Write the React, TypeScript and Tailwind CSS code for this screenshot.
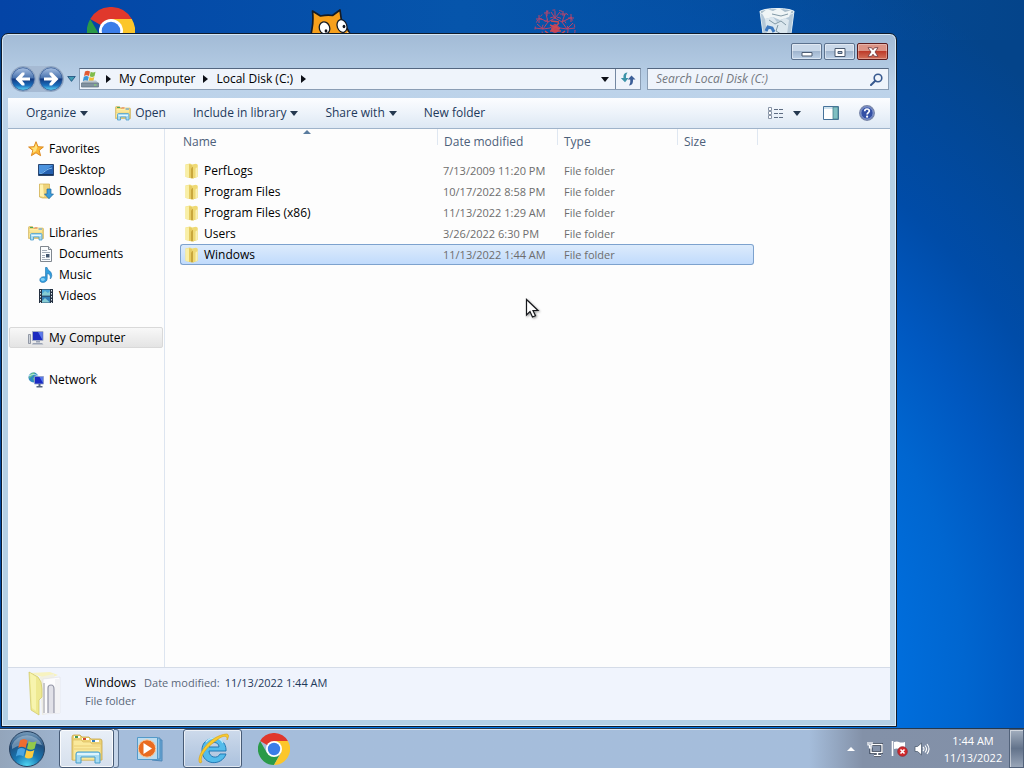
import React from "react";

const font = "font-['Open_Sans','Noto_Sans',sans-serif]";

function ChromeIcon({ className }: { className: string }) {
  return (
    <svg viewBox="0 0 48 48" className={className} aria-hidden="true">
      <path d="M24 24 3.2 12A24 24 0 0 1 44.8 12Z" fill="#e0382c" />
      <path d="M3.2 12A24 24 0 0 0 24 48L34 30 24 24 13.6 30Z" fill="#2a9a48" />
      <path d="M34.4 30 24 48A24 24 0 0 0 44.8 12H24Z" fill="#fcc62b" />
      <circle cx="24" cy="24" r="12" fill="#fff" />
      <circle cx="24" cy="24" r="9.3" fill="#3b7de8" />
    </svg>
  );
}

function CatIcon() {
  return (
    <svg viewBox="0 0 48 48" className="size-12" aria-hidden="true">
      <path d="M3 26C4 18 6 15 4.500 2l8 5c5-1 9-1 12-.5l7.500-5.500 1.500 11c5 6 8 10 9 15l1 8H2z" fill="#f7a01c" stroke="#151b25" strokeWidth="1.700" strokeLinejoin="round" />
      <ellipse cx="16.500" cy="19" rx="5.200" ry="6.300" fill="#fff" stroke="#151b25" strokeWidth="1.300" transform="rotate(-18 16.500 19)" />
      <ellipse cx="34" cy="17" rx="4.800" ry="6.500" fill="#fff" stroke="#151b25" strokeWidth="1.300" transform="rotate(-20 34 17)" />
      <ellipse cx="18" cy="22" rx="1.400" ry="1.800" fill="#10131a" />
      <ellipse cx="36" cy="17.500" rx="1.400" ry="1.800" fill="#10131a" />
      <path d="m39 23 5 2-2 4z" fill="#fff" />
    </svg>
  );
}

function AtomIcon() {
  return (
    <svg viewBox="0 0 48 48" className="size-12" fill="none" stroke="#b8446a" strokeWidth="1" aria-hidden="true">
      <circle cx="24" cy="23" r="20" strokeDasharray="3 4" />
      <circle cx="24" cy="23" r="13" strokeDasharray="4 3" />
      <path d="M24 4v7l-7 4-9-4m16 0 7 4 10-5M24 11l-4-6m4 6 5-6M17 15l-5 7-8-1m13-6-2-8m16 8 5 7 8-1m-13-6 3-8M12 22l7-1 5-4 5 4 7 1M6 17l6 5m24 0 6-6M8 8v8m-3-4h6m29-5v8m-3-4h6M16 3v6m-3-3h6m13-2v5m-3-2h6" />
      <circle cx="24" cy="22" r="3.500" fill="#c44358" />
      <path d="m19 18 10 4m-9 2 8-8M20 14l8 1m-9 9h11M14 24l4 3m16-3-4 3" stroke="#cc4a52" strokeWidth="1.500" />
    </svg>
  );
}

function BinIcon() {
  return (
    <svg viewBox="0 0 40 44" className="h-11 w-10" aria-hidden="true">
      <path d="m3 3 5 38h24l5-38z" fill="#b4c8d8" stroke="#dcebf4" />
      <ellipse cx="20" cy="4" rx="17" ry="3.500" fill="#a9bdca" stroke="#e9f3f8" />
      <path d="m5 5 5-4 6 2 6-3 6 4 7-2-3 7-9 3-7-3-8 2z" fill="#eff5f6" />
      <path d="m8 11 8-2 4 5 8-4 4 2-2 14H10z" fill="#dbe7ee" />
      <path d="m15 6 9 2 7-2M12 12l6 4 6-3 5 4m-8 0-2 6 5 3" stroke="#8199a6" fill="none" />
      <path d="m9 23 2-4 4 1 2 4" stroke="#3c78bf" strokeWidth="3" fill="none" />
    </svg>
  );
}

function Folder() {
  return (
    <svg viewBox="0 0 16 16" className="size-4" aria-hidden="true">
      <path d="M1.500 1.500 6 .5l2 1 4-.7 1.500 1V14l-5 1.500-7-1.500z" fill="#eedb77" />
      <path d="M1.500 1.500 5 1.200v13.500l-3.500-1z" fill="#f9efa6" />
      <path d="M5 1.200 8 2v6l-1.500 7.200L5 14.700z" fill="#e6cc62" />
      <path d="M7 5.500 9.500 3v12.300H7z" fill="#c8a63c" />
      <path d="M9 2.500 11 1l2.500.8V13.500L9 15.500z" fill="#efd974" />
      <path d="M11.500 5.500 13.500 4v9.500l-2 1z" fill="#faf1b4" />
    </svg>
  );
}

function LibraryIcon() {
  return (
    <svg viewBox="0 0 32 32" className="size-4" aria-hidden="true">
      <path d="M1 5q0-2 2-2h6l2 3h18q2 0 2 2v19H1z" fill="#f0d477" stroke="#c5a447" />
      <path d="M3 8h10l2-3h13v19H3z" fill="#fff1ac" />
      <path d="M4 4h6v2H4z" fill="#48a860" />
      <path d="M13 5h6v2h-6z" fill="#de633b" />
      <path d="M21 7h7v2h-7z" fill="#3a83cc" />
      <path d="M2 12h28M2 15h28" stroke="#e7c866" />
      <path d="M5 30V19q0-2 2-2h19q2 0 2 2v11h-6v-6H11v6z" fill="#a9dbf2" stroke="#4499c9" strokeWidth="1.5" />
      <path d="M7 20h19v2H7z" fill="#e4f7ff" />
    </svg>
  );
}

function StarIcon() {
  return (
    <svg viewBox="0 0 16 16" className="size-4" aria-hidden="true">
      <path d="m8 .7 2 5 5.400.3-4.200 3.400 1.400 5.300L8 11.800l-4.600 2.900 1.400-5.300L.6 6 6 5.700z" fill="#fbb836" stroke="#d98116" strokeWidth=".9" strokeLinejoin="round" />
      <path d="M8 2.500 9.300 6.500 8 10 4.500 12l1-3.500L2.800 6.700l3.700-.3z" fill="#ffe480" />
    </svg>
  );
}

function DesktopIcon() {
  return (
    <svg viewBox="0 0 16 16" className="size-4" aria-hidden="true">
      <path d="M.5 2.500h15v11H.5z" fill="#2560b0" stroke="#2a4671" />
      <path d="M1 3h14L2 12H1z" fill="#4c93de" />
      <path d="M2 12c4-1 6-5 12-6" stroke="#83c0f2" fill="none" />
      <path d="M1 12h14v1H1z" fill="#16365e" />
    </svg>
  );
}

function DownloadsIcon() {
  return (
    <svg viewBox="0 0 16 16" className="size-4" aria-hidden="true">
      <path d="M1.500 1h10v14h-7l-3-1z" fill="#eed37a" stroke="#ceac4a" strokeWidth=".7" />
      <path d="M2 1.500h3l1 12.500-4-1z" fill="#fff2b0" />
      <path d="M9 6h4v5h2.500L11 15.700 6.500 11H9z" fill="#3b9bd9" stroke="#20689e" strokeWidth=".7" />
    </svg>
  );
}

function DocumentIcon() {
  return (
    <svg viewBox="0 0 16 16" className="size-4" aria-hidden="true">
      <path d="M2.500.5h8l3 3v12h-11z" fill="#fafcfe" stroke="#80878f" />
      <path d="M10.500.5v3h3" fill="#dce4ec" stroke="#80878f" />
      <path d="M4 4.500h5M4 6.500h8M4 9.500h3M4 11.500h3M4 13.500h8" stroke="#a3acb7" />
      <path d="M8 8h3.500v3.500H8z" fill="#42566f" />
    </svg>
  );
}

function MusicIcon() {
  return (
    <svg viewBox="0 0 16 16" className="size-4" aria-hidden="true">
      <path d="M7.500.5 9 .3c0 3 5 3.700 4.800 8.200-.1 1.800-1 3-1.600 3.500.6-3.500-.4-4.800-3-5.500v5.200C9.200 16 2 17 1.800 13c0-2.700 3-4 5.700-3z" fill="#319ede" stroke="#1c70ac" strokeWidth=".6" />
      <ellipse cx="4.800" cy="12.500" rx="2" ry="1.400" fill="#83d0f7" />
    </svg>
  );
}

function VideoIcon() {
  return (
    <svg viewBox="0 0 16 16" className="size-4" aria-hidden="true">
      <path d="M1 1h14v14H1z" fill="#253141" />
      <path d="M4 1.500h8v6H4z" fill="#4aa7d8" />
      <path d="M4 8.500h8v6H4z" fill="#327db6" />
      <path d="m4 6 3-3 3 2 2-2v4.500H4zM4 13l3-3 5 4.500H4z" fill="#86ccd3" />
      <path d="M2.500 2v13M13.500 2v13" stroke="#dae4ed" strokeDasharray="1.500 1.500" />
    </svg>
  );
}

function ComputerIcon() {
  return (
    <svg viewBox="0 0 16 16" className="size-4" aria-hidden="true">
      <path d="M.5 4.500h2v9h-2z" fill="#ccd2db" stroke="#7f8795" strokeWidth=".8" />
      <path d="M4.500 1.500h10.500v9H4.500z" fill="#1b2ac0" stroke="#a3acc4" />
      <path d="M10 2h4.500V10z" fill="#5b78ea" />
      <path d="M8 11h4v1.500H8zM5 13h9l1.500 1.500H4z" fill="#9aa3b5" />
    </svg>
  );
}

function NetworkIcon() {
  return (
    <svg viewBox="0 0 16 16" className="size-4" aria-hidden="true">
      <circle cx="5.500" cy="5.500" r="5" fill="#2f8ac2" />
      <path d="M2 2.500c2-2 4-2 5-2l-1 2-3 2.500L1 6.500zM5 6l3-1v4l-2 1z" fill="#67c28a" />
      <path d="M1 4c3-2 6-2 9 0" stroke="#c2ecf7" fill="none" />
      <path d="M6.500 4.500h9V12h-9z" fill="#1b2ac4" stroke="#98a5c5" strokeWidth=".8" />
      <path d="M11.500 5H15v6z" fill="#5678ea" />
      <path d="M10.500 12h2v2h-2zM8.500 14h6v1.500h-6z" fill="#53647f" />
    </svg>
  );
}

function DriveIcon() {
  return (
    <svg viewBox="0 0 18 18" className="size-[18px]" aria-hidden="true">
      <path d="M4 1.500q2.500-1.500 5 0L8 6Q5.500 4.500 3 6z" fill="#e25a32" />
      <path d="M9.700 1.800q2.300 1.400 4.800 0l-1 4.500q-2.500 1.400-4.800 0z" fill="#7fbc4b" />
      <path d="M2.800 6.700q2.500-1.500 5 0l-1 4.500q-2.500-1.500-5 0z" fill="#3b95d5" />
      <path d="M8.500 7q2.300 1.400 4.800 0l-1 4.500q-2.500 1.400-4.800 0z" fill="#f2be37" />
      <path d="m.5 13 2.500-2.500h12l2.500 2.500z" fill="#bac5ce" />
      <path d="M.5 13h17v4H.5z" fill="#8292a0" stroke="#5f707e" strokeWidth=".7" />
      <path d="M13 14.500h2.500v1H13z" fill="#8be36a" />
    </svg>
  );
}

function NavCircle({ flip = false }: { flip?: boolean }) {
  const id = flip ? "nav-fwd" : "nav-back";
  return (
    <svg viewBox="0 0 26 26" className="size-[26px]" aria-hidden="true">
      <defs>
        <linearGradient id={id} x1="0" y1="0" x2="0" y2="1">
          <stop offset="0" stopColor="#a9c1e2" />
          <stop offset=".45" stopColor="#4a74b0" />
          <stop offset=".5" stopColor="#12387f" />
          <stop offset=".78" stopColor="#1a6fbd" />
          <stop offset="1" stopColor="#62dcf7" />
        </linearGradient>
      </defs>
      <circle cx="13" cy="13" r="12.300" fill="#c4d5e8" stroke="#7b93b2" strokeWidth=".8" />
      <circle cx="13" cy="13" r="11.300" fill={`url(#${id})`} stroke="#2f5490" strokeWidth=".8" />
      <path
        d={flip ? "M20.500 13 14 6.500h-2.500v2l2.500 3H6v3h8l-2.500 3v2H14z" : "M5.500 13 12 6.500h2.500v2l-2.500 3h8v3h-8l2.500 3v2H12z"}
        fill="#fff"
      />
    </svg>
  );
}

function Down({ className = "text-[#24384f]" }: { className?: string }) {
  return (
    <svg viewBox="0 0 8 5" className={`h-[5px] w-2 ${className}`} aria-hidden="true">
      <path d="M0 0h8L4 5z" fill="currentColor" />
    </svg>
  );
}

function Right() {
  return (
    <svg viewBox="0 0 5 8" className="h-2 w-[5px]" aria-hidden="true">
      <path d="M0 0v8l5-4z" fill="#0c0f16" />
    </svg>
  );
}

function StartOrb() {
  return (
    <svg viewBox="0 0 38 38" className="size-[38px]" aria-hidden="true">
      <defs>
        <radialGradient id="orb" cx=".5" cy="1" r=".95">
          <stop offset="0" stopColor="#53dcf6" />
          <stop offset=".4" stopColor="#1878b4" />
          <stop offset=".75" stopColor="#1f5080" />
          <stop offset="1" stopColor="#6d93b4" />
        </radialGradient>
      </defs>
      <circle cx="19" cy="19" r="17.500" fill="url(#orb)" stroke="#26405f" />
      <path d="M4 15A16 15 0 0 1 34 15Q19 10 4 19z" fill="#d4e6f2" opacity=".4" />
      <path d="M12 10.500q4-3 7.500 0l-1.800 7.500q-4.200-2.500-7.500 0z" fill="#ee6c30" />
      <path d="M20.800 11q3.700 2.500 7.700 0l-1.800 7.500q-3.700 2.500-7.700 0z" fill="#93c94a" />
      <path d="M9.700 19.500q3.700-2.800 7.500 0l-1.800 7q-3.800-2.500-7.500 0z" fill="#49a5e2" />
      <path d="M18.500 20q3.700 2.500 7.800 0l-1.800 7.200q-3.800 2.500-7.800 0z" fill="#fccb40" />
    </svg>
  );
}

function ExplorerIcon() {
  return (
    <svg viewBox="0 0 34 32" className="h-8 w-[34px]" aria-hidden="true">
      <path d="M2 4q0-2 2-2h6l2 2h7l2 2h9q2 0 2 2v19H2z" fill="#ecd274" stroke="#c7a548" strokeWidth=".8" />
      <path d="M3 7h8l2 2h7l2 2h9v16H3z" fill="#fae99b" stroke="#dfc16a" strokeWidth=".8" />
      <path d="M4 3h6v2H4z" fill="#fff" />
      <path d="M5 3h3v2H5z" fill="#459a55" />
      <path d="M12 5h7v2h-7z" fill="#fff" />
      <path d="M13 5h3v2h-3z" fill="#d24c32" />
      <path d="M21 7h8v2h-8z" fill="#fff" />
      <path d="M22 7h3v2h-3z" fill="#3a82ba" />
      <path d="M4 13h26M4 16h26" stroke="#eacd76" />
      <path d="M6 30V21q0-2 2-2h20q2 0 2 2v9h-5v-6H11v6z" fill="#a8dcf2" stroke="#479dcb" />
      <path d="M7 20h22v2H7z" fill="#def4fc" />
    </svg>
  );
}

function PlayerIcon() {
  return (
    <svg viewBox="0 0 28 26" className="h-[26px] w-7" aria-hidden="true">
      <path d="m16 3 10 1v21l-10-1z" fill="#6aa8d5" stroke="#4d87b8" />
      <path d="M12 2h12v21H12z" fill="#91c4e5" stroke="#4d8bbd" />
      <path d="M1.500 1.500h20v22h-20z" fill="#bcdcef" stroke="#539ac9" />
      <circle cx="11" cy="12.500" r="8.700" fill="#e96b20" stroke="#f7cba1" />
      <path d="m7.500 7 8.500 5.500L7.500 18z" fill="#fff" />
    </svg>
  );
}

function BrowserIcon() {
  return (
    <svg viewBox="0 0 34 34" className="size-[34px]" aria-hidden="true">
      <path d="M30 19H13c0 7 9 8 11 3h6C26 34 7 34 6 19 5 2 31 2 30 19zM13 15h10c0-6-9-6-10 0z" fill="#54bceb" stroke="#2379b4" />
      <path d="M10 10C14 5 24 4 27 11" stroke="#b5e8fc" strokeWidth="1.500" fill="none" />
      <path d="M4 31C-1 26 13 3 31 2q3 1 0 6c1-5-4-5-10 0C9 16 3 26 6 30z" fill="#f9cb2e" stroke="#d9a41d" strokeWidth=".7" />
    </svg>
  );
}

function BigFolder() {
  return (
    <svg viewBox="0 0 38 46" className="h-[46px] w-[38px]" aria-hidden="true">
      <path d="m2 2 20-1 8 3-10 4z" fill="#f7f3c0" />
      <path d="m12 6 14-3 1 38-13 3z" fill="#f1f0e2" />
      <path d="m15 8 17-2v36l-17 1z" fill="#fcfcfd" stroke="#e3e3e6" strokeWidth=".7" />
      <path d="M20 42V17q0-3 3-3t3 4v24" fill="#e1e1e8" stroke="#9597a7" strokeWidth="1.200" />
      <path d="M27 8h5v34h-5z" fill="#f3f3f5" />
      <path d="m1 1 9 5q4 4 4 12v8l-3 3v15l-8-5z" fill="#eee991" stroke="#cfc766" strokeWidth=".7" />
      <path d="m2 2 6 4v34l-4-3z" fill="#f7f4ae" />
      <path d="M16 12v30" stroke="#c8c8cc" strokeWidth="2" />
    </svg>
  );
}

const navGroups = [
  { label: "Favorites", icon: <StarIcon />, items: [{ label: "Desktop", icon: <DesktopIcon /> }, { label: "Downloads", icon: <DownloadsIcon /> }] },
  { label: "Libraries", icon: <LibraryIcon />, items: [{ label: "Documents", icon: <DocumentIcon /> }, { label: "Music", icon: <MusicIcon /> }, { label: "Videos", icon: <VideoIcon /> }] },
  { label: "My Computer", icon: <ComputerIcon />, items: [], selected: true },
  { label: "Network", icon: <NetworkIcon />, items: [] },
];

const files = [
  { name: "PerfLogs", date: "7/13/2009 11:20 PM" },
  { name: "Program Files", date: "10/17/2022 8:58 PM" },
  { name: "Program Files (x86)", date: "11/13/2022 1:29 AM" },
  { name: "Users", date: "3/26/2022 6:30 PM" },
  { name: "Windows", date: "11/13/2022 1:44 AM", selected: true },
];

const captionButton = "flex h-[17px] w-[31px] items-center justify-center rounded-[2px] border";
const plainCaption = "border-[#5c728e] bg-linear-to-b from-[#c9d8e9] from-45% via-[#a0b5ce] via-50% to-[#bed2e8] shadow-[inset_0_0_0_1px_rgba(255,255,255,0.45)]";

function WindowControls() {
  return (
    <div className="flex h-[33px] items-start justify-end gap-[2px] pt-2 pr-[2px]">
      <button aria-label="Minimize" className={`${captionButton} ${plainCaption}`}>
        <svg viewBox="0 0 12 10" className="h-[10px] w-3"><path d="M1 5.500h10v3.500H1z" fill="#fff" stroke="#4a5a70" /></svg>
      </button>
      <button aria-label="Maximize" className={`${captionButton} ${plainCaption}`}>
        <svg viewBox="0 0 12 10" className="h-[10px] w-3"><path d="M1 1.500h10v8H1zM4 4.500h4v2H4z" fill="#fff" fillRule="evenodd" stroke="#4a5a70" /></svg>
      </button>
      <button aria-label="Close" className={`${captionButton} border-[#5c1c1d] bg-linear-to-b from-[#dc9486] from-45% via-[#bd3b2a] via-50% to-[#d3705a] shadow-[inset_0_0_0_1px_rgba(255,255,255,0.3)]`}>
        <svg viewBox="0 0 12 10" className="h-[10px] w-3"><path d="M1 .7h3.500L6 2.800 7.500.7H11L8 5l3 4.300H7.500L6 7.200 4.500 9.300H1L4 5z" fill="#fff" stroke="#6b3438" strokeWidth=".8" /></svg>
      </button>
    </div>
  );
}

function AddressRow() {
  return (
    <div className="flex h-[22px] items-center pr-px pl-[2px]">
      <div className="flex items-center gap-[2px] rounded-full bg-[#a6bad3]">
        <button aria-label="Back"><NavCircle /></button>
        <button aria-label="Forward"><NavCircle flip /></button>
      </div>
      <button aria-label="Recent pages" className="flex w-[15px] justify-center">
        <svg viewBox="0 0 9 6" className="h-[6px] w-[9px]" aria-hidden="true">
          <path d="M.7.500h7.600L4.500 5.400z" fill="#3f9cb4" stroke="#1c4a78" strokeWidth=".8" />
        </svg>
      </button>
      <div className="flex h-full flex-1 items-center border border-[#8a9db4] border-t-[#536680] bg-[#eff4fb]">
        <button aria-label="Location" className="flex w-[26px] items-center pl-px"><DriveIcon /></button>
        <Right />
        <button className="mx-2 whitespace-nowrap">My Computer</button>
        <Right />
        <button className="mx-2 whitespace-nowrap">Local Disk (C:)</button>
        <Right />
        <button aria-label="Previous locations" className="ml-auto flex h-full w-5 items-center justify-center"><Down className="text-[#0c0f16]" /></button>
        <button aria-label="Refresh" className="flex h-full w-[25px] items-center justify-center border-l border-[#7488a2]">
          <svg viewBox="0 0 16 14" className="h-[14px] w-4" aria-hidden="true">
            <path d="M7.500.5C3 1 3.500 4 3.500 6H.8L5 10.300 8.500 6H6c0-2 0-3.500 1.500-5.500z" fill="#3c93a8" />
            <path d="M9 13.500c4-.5 4-3 4-6h2.500L11.500 3.500 7.800 7.500h2.400c.3 2.500 0 4-1.200 6z" fill="#3c5f98" />
          </svg>
        </button>
      </div>
      <div className="ml-[6px] flex h-full w-[242px] items-center border border-[#8a9db4] border-t-[#536680] bg-[#eff4fb] pr-[5px] pl-2">
        <input aria-label="Search" placeholder="Search Local Disk (C:)" className="min-w-0 flex-1 bg-transparent italic outline-none placeholder:text-[#74787f] placeholder:opacity-100" />
        <svg viewBox="0 0 13 13" className="size-[13px]" fill="none" aria-hidden="true">
          <circle cx="8" cy="5" r="3.800" stroke="#38598f" strokeWidth="1.600" />
          <path d="M5.300 7.700 1 12" stroke="#38598f" strokeWidth="2" strokeLinecap="round" />
        </svg>
      </div>
    </div>
  );
}

const toolButton = "flex items-center gap-1 whitespace-nowrap";

function CommandBar() {
  return (
    <div className="mt-2 flex h-[31px] items-center gap-[27px] border-b border-[#9fb3ca] bg-linear-to-b from-[#fcfdff] from-0% via-[#edf3fa] via-50% to-[#dde8f4] pr-[15px] pl-[18px] text-[#1e395b]">
      <button className={toolButton}>Organize <Down /></button>
      <button className={toolButton}><LibraryIcon />Open</button>
      <button className={toolButton}>Include in library <Down /></button>
      <button className={toolButton}>Share with <Down /></button>
      <button className={toolButton}>New folder</button>
      <div className="ml-auto flex items-center">
        <button aria-label="Change view">
          <svg viewBox="0 0 16 14" className="h-[14px] w-4" fill="none" aria-hidden="true">
            <path d="M.5 1.500h3v3h-3zM.5 5.500h3v3h-3zM.5 9.500h3v3h-3z" fill="#fff" stroke="#8894a6" />
            <path d="M6 3.500h4m1 0h4M6 7.500h4m1 0h4M6 11.500h4m1 0h4" stroke="#5d6c82" />
          </svg>
        </button>
        <button aria-label="More view options" className="ml-[9px]"><Down /></button>
        <button aria-label="Preview pane" className="ml-[22px]">
          <svg viewBox="0 0 16 14" className="h-[14px] w-4" aria-hidden="true">
            <path d="M.5.5h15v13H.5z" fill="#fff" stroke="#46729a" />
            <path d="M1 1h14v2H1z" fill="#cfe3ef" />
            <path d="M10 1h5v12h-5z" fill="#7fbfc2" stroke="#46828e" strokeWidth=".8" />
          </svg>
        </button>
        <button aria-label="Help" className="ml-5">
          <svg viewBox="0 0 16 16" className="size-4" aria-hidden="true">
            <circle cx="8" cy="8" r="7.300" fill="#3450a5" stroke="#7986a8" strokeWidth="1.300" />
            <circle cx="8" cy="8" r="6.200" fill="none" stroke="#b7c7e8" strokeWidth=".7" />
            <path d="M5.700 6.300Q5.800 4 8 4t2.300 2c0 1.500-2.200 1.700-2.200 3.600" stroke="#fff" strokeWidth="1.700" fill="none" />
            <circle cx="8.100" cy="11.700" r="1.100" fill="#fff" />
          </svg>
        </button>
      </div>
    </div>
  );
}

function NavPane() {
  return (
    <nav className="flex w-[157px] shrink-0 flex-col gap-[21px] border-r border-[#dde5f0] px-px pt-[9px]">
      {navGroups.map((group) => (
        <div key={group.label}>
          <a
            href="#"
            className={`flex h-[21px] items-center gap-[5px] rounded-[2px] border pl-[18px] ${group.selected ? "border-[#d9d9d9] bg-linear-to-b from-[#f8f8f8] to-[#e4e4e4]" : "border-transparent"}`}
          >
            {group.icon}
            {group.label}
          </a>
          {group.items.map((item) => (
            <a key={item.label} href="#" className="flex h-[21px] items-center gap-[5px] pl-[29px]">
              {item.icon}
              {item.label}
            </a>
          ))}
        </div>
      ))}
    </nav>
  );
}

const headCell = "h-[31px] p-0 text-left align-top font-normal";
const headLabel = "flex h-4 items-start border-l border-[#dfe7f1] pt-[5px] pl-[6px]";

function FileList() {
  return (
    <main className="flex-1 pl-[15px]">
      <table className="w-[578px] table-fixed border-separate border-spacing-0">
        <colgroup>
          <col className="w-[257px]" />
          <col className="w-[120px]" />
          <col className="w-[120px]" />
          <col className="w-[77px]" />
          <col className="w-[4px]" />
        </colgroup>
        <thead className="text-[#4c607a]">
          <tr>
            <th className={`${headCell} relative`}>
              <div className="pt-[5px] pl-[3px]">Name</div>
              <svg viewBox="0 0 8 4" className="absolute top-px left-[123px] h-1 w-2" aria-hidden="true">
                <path d="m0 4 4-4 4 4z" fill="#5a7c9e" />
              </svg>
            </th>
            <th className={headCell}><div className={headLabel}>Date modified</div></th>
            <th className={headCell}><div className={headLabel}>Type</div></th>
            <th className={headCell} colSpan={2}><div className={`${headLabel} border-r`}>Size</div></th>
          </tr>
        </thead>
        <tbody className="text-[#6d6d6d]">
          {files.map((file) => {
            const cell = file.selected ? "h-[21px] border-y border-[#7da2ce] bg-linear-to-b from-[#dcebfc] to-[#c1dbfc] p-0 whitespace-nowrap" : "h-[21px] p-0 whitespace-nowrap";
            return (
              <tr key={file.name}>
                <td className={`${cell} text-black ${file.selected ? "rounded-l-[3px] border-l" : ""}`}>
                  <div className={`flex items-center gap-1 ${file.selected ? "pl-[3px]" : "pl-1"}`}>
                    <Folder />
                    {file.name}
                  </div>
                </td>
                <td className={`${cell} pl-[6px] text-[11px]`}>{file.date}</td>
                <td className={`${cell} pl-[7px] text-[11px]`}>File folder</td>
                <td className={`${cell} ${file.selected ? "rounded-r-[3px] border-r" : ""}`}></td>
                <td className="p-0"></td>
              </tr>
            );
          })}
        </tbody>
      </table>
    </main>
  );
}

function DetailsPane() {
  return (
    <footer className="flex h-[53px] items-center border-t border-[#d5dce8] bg-[#f0f4fd] pl-5">
      <BigFolder />
      <div className="ml-[19px] pb-1 text-[11px] leading-[18px] text-[#5a6779]">
        <div className="flex gap-[5px]">
          <span className="text-[12px] text-black">Windows</span>
          <span className="ml-[3px]">Date modified:</span>
          <span className="text-[#1e395b]">11/13/2022 1:44 AM</span>
        </div>
        <div>File folder</div>
      </div>
    </footer>
  );
}

function Taskbar() {
  return (
    <div className="flex h-10 items-center border-t border-[#26384c] bg-linear-to-r from-[#93a5bb] from-0% via-[#a5bddb] via-10% to-[#a5bddb] to-80% text-white shadow-[inset_0_1px_0_rgba(255,255,255,0.6)]">
      <button aria-label="Start" className="ml-2"><StartOrb /></button>
      <button aria-label="File Explorer" className="ml-[13px] flex h-full w-[55px] items-center justify-center rounded-[3px] border border-[#475b76] bg-linear-to-b from-[#e9eff7] to-[#d6e0ed] shadow-[inset_0_0_0_1px_rgba(255,255,255,0.8)]"><ExplorerIcon /></button>
      <div className="h-full w-[5px] rounded-r-[3px] border-y border-r border-[#5d7390] bg-[#c4d4e8]" />
      <button aria-label="Media Player" className="ml-[17px]"><PlayerIcon /></button>
      <button aria-label="Internet Explorer" className="ml-[19px] flex h-full w-[59px] items-center justify-center rounded-[3px] border border-[#475b76] bg-linear-to-b from-[#cddaeb] to-[#abc1dd] shadow-[inset_0_0_0_1px_rgba(255,255,255,0.6)]"><BrowserIcon /></button>
      <button aria-label="Chrome" className="ml-4"><ChromeIcon className="size-8" /></button>
      <div className="ml-auto flex h-full items-center bg-linear-to-r from-transparent via-[#8391a8] via-25% to-[#8290a8] pl-[38px]">
        <button aria-label="Show hidden icons">
          <svg viewBox="0 0 8 4" className="h-1 w-2"><path d="m0 4 4-4 4 4z" fill="#fff" /></svg>
        </button>
        <button aria-label="Network status" className="ml-3">
          <svg viewBox="0 0 16 16" className="size-4" fill="none" aria-hidden="true">
            <path d="M5 3.500h10v8H4v-5M7 14.500h7M10.500 12v2" stroke="#253044" strokeWidth="3" />
            <path d="M5 3.500h10v8H4v-5M7 14.500h7M10.500 12v2" stroke="#fff" strokeWidth="1.400" />
            <path d="M1 1v3h1.500v3H4V4h1V1M3 1v2" stroke="#fff" strokeWidth="1.200" />
          </svg>
        </button>
        <button aria-label="Action center" className="ml-2">
          <svg viewBox="0 0 17 17" className="size-[17px]" aria-hidden="true">
            <path d="M1.500 1v15" stroke="#fff" strokeWidth="1.600" />
            <path d="M3 2q3-1 5 0t6 0v7q-4 1-6 0T3 9z" fill="#fff" />
            <circle cx="11.500" cy="11.500" r="4.800" fill="#d3292c" stroke="#8e2530" strokeWidth=".8" />
            <path d="m9.500 9.500 4 4m0-4-4 4" stroke="#fff" strokeWidth="1.600" />
          </svg>
        </button>
        <button aria-label="Volume" className="ml-[6px]">
          <svg viewBox="0 0 16 16" className="size-4" fill="none" stroke="#fff" aria-hidden="true">
            <path d="M1 5.500h2.500L7.500 2v12l-4-3.500H1z" fill="#fff" stroke="#4f5d70" strokeWidth=".8" />
            <path d="M9 6q2 2 0 4M11 4.500q3 3.500 0 7M13 3q4 5 0 10" strokeWidth="1.100" />
          </svg>
        </button>
        <div className="ml-3 w-[62px] text-center text-[11px] leading-[17px] whitespace-nowrap">
          <div>1:44 AM</div>
          <div>11/13/2022</div>
        </div>
        <button aria-label="Show desktop" className="ml-[5px] h-full w-[15px] border border-[#52627a] bg-linear-to-b from-[#a3afbf] via-[#63738b] to-[#98a5b8] shadow-[inset_1px_1px_0_rgba(255,255,255,0.5)]" />
      </div>
    </div>
  );
}

export default function App() {
  return (
    <div className={`flex h-screen flex-col overflow-hidden text-[12px] leading-[16px] text-black ${font}`}>
      <div className="relative flex-1 overflow-hidden bg-[radial-gradient(ellipse_70%_110%_at_55%_95%,#007aec_0%,#0073e4_40%,#0066d0_56%,#0058c0_66%,#004ca8_77%,#04448a_100%)]">
        <div className="absolute top-0 left-0 h-10 w-full bg-linear-to-r from-[#0444a6] via-[#0655ab] via-45% to-transparent" />
        <button aria-label="Chrome shortcut" className="absolute top-[7px] left-[87px]"><ChromeIcon className="size-12" /></button>
        <button aria-label="Cat shortcut" className="absolute top-[9px] left-[308px]"><CatIcon /></button>
        <button aria-label="Atom shortcut" className="absolute top-[7px] left-[531px]"><AtomIcon /></button>
        <button aria-label="Recycle Bin" className="absolute top-2 left-[757px]"><BinIcon /></button>

        <section className="absolute top-[33px] right-[127px] bottom-px left-px flex flex-col rounded-t-[7px] border border-[#101c2c] bg-linear-to-b from-[#a2bbd6] from-0% via-[#bdd3ea] via-8% to-[#b4d0e5] to-22% px-[6px] pt-px pb-[6px] shadow-[inset_0_0_0_1px_rgba(232,247,255,0.75)]">
          <WindowControls />
          <AddressRow />
          <CommandBar />
          <div className="flex min-h-0 flex-1 bg-[#fdfdfd]">
            <NavPane />
            <FileList />
          </div>
          <DetailsPane />
        </section>

        <svg viewBox="0 0 16 22" className="absolute top-[298px] left-[525px] h-[22px] w-4 drop-shadow-[1px_1px_1px_rgba(0,0,0,0.4)]" aria-hidden="true">
          <path d="M1.500 1.500v15.500l3.500-3.500 2.500 5.500 3-1.300-2.500-5.200h5z" fill="#fff" stroke="#17191d" strokeWidth="1.200" />
        </svg>
      </div>
      <Taskbar />
    </div>
  );
}
